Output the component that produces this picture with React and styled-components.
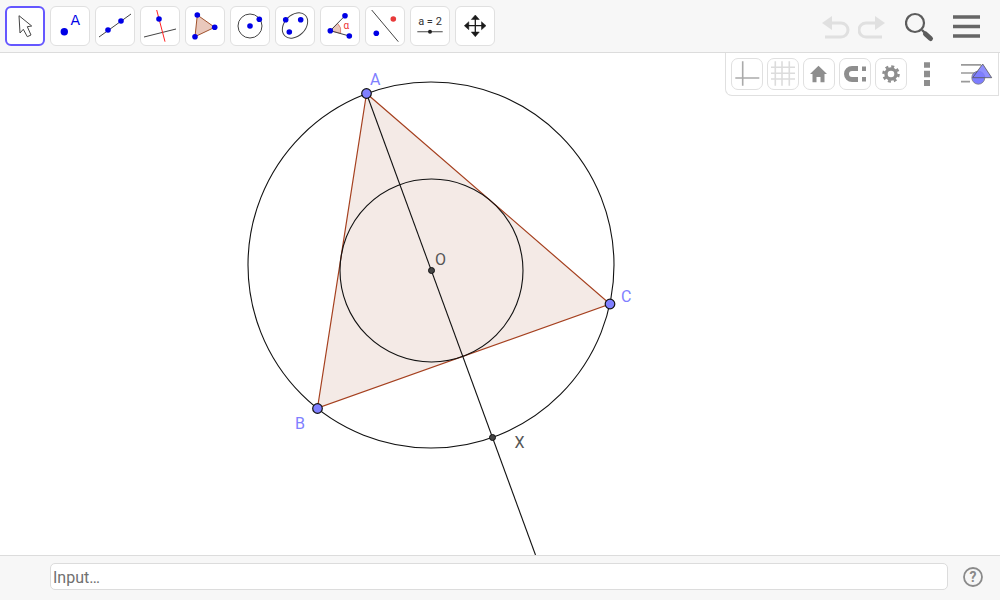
import React from "react";
import styled, { createGlobalStyle } from "styled-components";

const Global = createGlobalStyle`
  html, body { margin: 0; padding: 0; background: #fff; }
  body { font-family: Roboto, "Liberation Sans", sans-serif; }
`;
const Page = styled.div`
  width: 1000px; height: 600px; display: flex; flex-direction: column; overflow: hidden; position: relative;
`;
const Toolbar = styled.div`
  height: 53px; flex: none; display: flex; align-items: flex-start; padding: 6px 0 0 5px; box-sizing: border-box;
  background: #f7f7f7; border-bottom: 1px solid #dcdcdc; gap: 5px;
`;
const ToolButton = styled.button`
  width: 40px; height: 40px; padding: 0; box-sizing: border-box; background: #fff; border-radius: 6px;
  border: ${p => (p.$active ? "2px solid #6557ff" : "1px solid #e0e0e0")};
  display: flex; align-items: center; justify-content: center;
`;
const ToolIcon = styled.svg`
  width: 38px; height: 38px; display: block; flex: none;
`;
const RightTools = styled.div`
  margin-left: auto; display: flex; align-items: flex-start; padding: 0 20px 0 0;
`;
const HeaderIcon = styled.svg`
  display: block; width: ${p => p.$w}px; height: 40px; flex: none;
`;
const Canvas = styled.div`
  flex: 1; position: relative; background: #fff; min-height: 0;
`;
const Drawing = styled.svg`
  display: block; width: 1000px; height: 502px;
`;
const StylePanel = styled.div`
  position: absolute; top: 0; right: 1px; width: 274px; height: 43px; box-sizing: border-box;
  background: #fff; border: 1px solid #e0e0e0; border-top: none; border-bottom-left-radius: 7px;
  display: flex; align-items: flex-start; padding: 5px 0 0 5px; gap: 4px;
`;
const StyleButton = styled.button`
  width: 32px; height: 32px; padding: 0; box-sizing: border-box; background: #fff;
  border: 1px solid #e0e0e0; border-radius: 7px; display: flex; align-items: center; justify-content: center;
`;
const StyleIcon = styled.svg`
  width: 30px; height: 30px; display: block; flex: none;
`;
const PanelDots = styled.svg`
  display: block; width: 32px; height: 32px; flex: none;
`;
const PanelToggle = styled.svg`
  display: block; width: 36px; height: 32px; flex: none; margin-left: auto; margin-right: 4px;
`;
const InputBar = styled.div`
  height: 45px; flex: none; box-sizing: border-box; background: #f7f7f7; border-top: 1px solid #dcdcdc;
  display: flex; align-items: flex-start; padding: 7px 15px 0 50px; gap: 14px;
`;
const InputField = styled.div`
  width: 898px; height: 27px; box-sizing: border-box; background: #fff; border: 1px solid #dcdcdc; border-radius: 5px;
  font-size: 16px; line-height: 27px; color: #707070; padding-left: 2px; flex: none;
`;
const HelpIcon = styled.svg`
  width: 22px; height: 22px; display: block; flex: none; margin-top: 3px;
`;

const P = ({ x, y, r = 2.8, fill = "#0000e6" }) => <circle cx={x} cy={y} r={r} fill={fill} />;

const tools = [
  <path key="m" d="M13 8.7 L14 26 L17.3 22.3 L21.3 29.7 L25 28 L21.3 19.7 L25.7 19 Z" fill="#fff" stroke="#444" strokeWidth="1" strokeLinejoin="round" />,
  <g key="p"><P x={13.3} y={24.7} r={3.7} /><text x={19.5} y={18} fontSize="14" fill="#0000e6" fontFamily="'DejaVu Sans', sans-serif">A</text></g>,
  <g key="l"><path d="M3 30 L35 7" stroke="#444" strokeWidth="1" /><P x={12} y={23} /><P x={25} y={14} /></g>,
  <g key="pb"><path d="M3 30 L35 22" stroke="#444" strokeWidth="1" /><path d="M15.7 3 L24 34.7" stroke="#f22" strokeWidth="1" /><P x={18} y={12} /></g>,
  <g key="t"><path d="M11.3 8 L28.7 20.3 L9 29.7 Z" fill="#e9c8bc" stroke="#a0522d" strokeWidth="1" /><P x={11.3} y={8} /><P x={28.7} y={20.3} /><P x={9} y={29.7} /></g>,
  <g key="c"><circle cx={19} cy={19} r={12} fill="none" stroke="#444" strokeWidth="1" /><P x={19} y={19} /><P x={28.3} y={12.3} /></g>,
  <g key="e"><ellipse cx={19} cy={18.5} rx={14.5} ry={10.5} transform="rotate(-45 19 18.5)" fill="none" stroke="#444" strokeWidth="1" /><P x={9.7} y={12.7} /><P x={24.7} y={12.7} /><P x={13.3} y={25} /></g>,
  <g key="a"><path d="M9.3 23.7 L16.7 16.4 A 10.5 10.5 0 0 1 19.6 26.4 Z" fill="#e9c8bc" stroke="#d9675a" strokeWidth="0.7" /><path d="M24 8.7 L9.3 23.7 L28.3 29" fill="none" stroke="#444" strokeWidth="1" /><P x={24} y={8.7} /><P x={9.3} y={23.7} /><P x={28.3} y={29} /><text x={22.5} y={22} fontSize="10" fill="#e33" fontFamily="Roboto, sans-serif">α</text></g>,
  <g key="pl"><path d="M5.7 3 L32.3 34.7" stroke="#444" strokeWidth="1" /><P x={10.3} y={26.3} /><P x={27.3} y={12} fill="#e83a3a" /></g>,
  <g key="s"><text x={19} y={18} fontSize="11" fill="#333" textAnchor="middle" fontFamily="Roboto, sans-serif">a = 2</text><path d="M6.3 24.7 L31.7 24.7" stroke="#666" strokeWidth="1.2" /><P x={19} y={24.7} r={2} fill="#222" /></g>,
  <g key="mv" fill="#1a1a1a" stroke="#1a1a1a"><path d="M19.3 11 V27 M11 18.7 H28" strokeWidth="1.3" /><path d="M19.3 8 L23.3 12.5 H15.3 Z M19.3 29.7 L23.3 25 H15.3 Z M8.3 18.7 L12.8 14.7 V22.7 Z M30 18.7 L25.5 14.7 V22.7 Z" strokeWidth="0.5" /></g>,
];

const styleIcons = [
  <path key="a" d="M10.7 2.3 V26.7 M3.3 19 H27.3" stroke="#aaa" strokeWidth="1.6" fill="none" />,
  <path key="g" d="M7.3 2.3 V26.7 M14 2.3 V26.7 M21.3 2.3 V26.7 M3 8.3 H27 M3 14.3 H27 M3 20 H27" stroke="#dcdcdc" strokeWidth="1.6" fill="none" />,
  <path key="h" d="M14.5 6.7 L23 15 L20.5 15 L20.5 23.3 L16.5 23.3 L16.5 18 L12.5 18 L12.5 23.3 L8.5 23.3 L8.5 15 L6 15 Z" fill="#8e8e8e" />,
  <g key="m"><path d="M18 9.5 H12 A5.5 5.5 0 0 0 12 20.5 H18" fill="none" stroke="#8e8e8e" strokeWidth="5" /><rect x={22} y={7.5} width={4} height={4.5} fill="#8e8e8e" /><rect x={22} y={18} width={4} height={4.5} fill="#8e8e8e" /></g>,
  <g key="s" fill="none" stroke="#8e8e8e"><circle cx={15} cy={15} r={5} strokeWidth="3.4" /><circle cx={15} cy={15} r={7.5} strokeWidth="2.6" strokeDasharray="3 2.89" /></g>,
];

export default function App() {
  return (
    <Page>
      <Global />
      <Toolbar>
        {tools.map((t, i) => (
          <ToolButton key={i} $active={i === 0}>
            <ToolIcon viewBox="0 0 38 38">{t}</ToolIcon>
          </ToolButton>
        ))}
        <RightTools>
          <HeaderIcon $w={36} viewBox="0 0 36 40">
            <path d="M8 17 H19 A7 7 0 0 1 19 31 H3" fill="none" stroke="#e0e0e0" strokeWidth="3" />
            <path d="M0 17 L10 10 V24 Z" fill="#e0e0e0" />
          </HeaderIcon>
          <HeaderIcon $w={47} viewBox="0 0 47 40">
            <path d="M19 17 H8 A7 7 0 0 0 8 31 H24" fill="none" stroke="#e0e0e0" strokeWidth="3" />
            <path d="M27 17 L17 10 V24 Z" fill="#e0e0e0" />
          </HeaderIcon>
          <HeaderIcon $w={48} viewBox="0 0 48 40">
            <circle cx="10" cy="17" r="9" fill="none" stroke="#5c5c5c" strokeWidth="2.2" />
            <path d="M17 24 L20 27" stroke="#5c5c5c" strokeWidth="2.4" />
            <path d="M20.5 28 L25.5 32.5" stroke="#5c5c5c" strokeWidth="5" strokeLinecap="round" />
          </HeaderIcon>
          <HeaderIcon $w={27} viewBox="0 0 27 40">
            <path d="M0 11 H27 M0 20.5 H27 M0 30 H27" stroke="#666" strokeWidth="3.6" />
          </HeaderIcon>
        </RightTools>
      </Toolbar>
      <Canvas>
        <Drawing viewBox="0 53 1000 502">
          <polygon points="366.5,93.5 317.5,408 610,304" fill="#f4eae6" stroke="#a5401f" strokeWidth="1.2" />
          <circle cx="431" cy="265" r="183" fill="none" stroke="#111" strokeWidth="1.1" />
          <circle cx="431.5" cy="270.5" r="91.5" fill="none" stroke="#111" strokeWidth="1.1" />
          <path d="M366.5 93.5 L535.5 555" stroke="#111" strokeWidth="1.1" />
          <circle cx="431.5" cy="270.5" r="3" fill="#444" stroke="#111" strokeWidth="1" />
          <circle cx="492.5" cy="437.5" r="3" fill="#444" stroke="#111" strokeWidth="1" />
          <circle cx="366.5" cy="93.5" r="4.8" fill="#8080ff" stroke="#111" strokeWidth="1.2" />
          <circle cx="317.5" cy="408.5" r="4.8" fill="#8080ff" stroke="#111" strokeWidth="1.2" />
          <circle cx="610" cy="304" r="4.8" fill="#8080ff" stroke="#111" strokeWidth="1.2" />
          <g fontFamily="Roboto, sans-serif" fontSize="16">
            <text x="370" y="84.5" fill="#8080ff">A</text>
            <text x="295" y="429" fill="#8080ff">B</text>
            <text x="621" y="302" fill="#8080ff">C</text>
            <text x="435" y="265" fill="#555">O</text>
            <text x="514.5" y="448" fill="#555">X</text>
          </g>
        </Drawing>
        <StylePanel>
          {styleIcons.map((s, i) => (
            <StyleButton key={i}>
              <StyleIcon viewBox="0 0 30 30">{s}</StyleIcon>
            </StyleButton>
          ))}
          <PanelDots viewBox="0 0 32 32">
            <path d="M13 4.3 H19 V9.7 H13 Z M13 12.7 H19 V19.3 H13 Z M13 22 H19 V28 H13 Z" fill="#8e8e8e" />
          </PanelDots>
          <PanelToggle viewBox="0 0 36 32">
            <path d="M3 6.8 H23 M3 15 H18 M3 23.7 H12" stroke="#9a9a9a" strokeWidth="1.7" />
            <circle cx="20.3" cy="19.7" r="6.5" fill="#7d7dff" stroke="#7a7a7a" strokeWidth="0.8" />
            <path d="M24.7 6 L33.7 19.7 H14.7 Z" fill="#7d7dff" fillOpacity="0.85" stroke="#555" strokeWidth="0.8" />
          </PanelToggle>
        </StylePanel>
      </Canvas>
      <InputBar>
        <InputField>Input…</InputField>
        <HelpIcon viewBox="0 0 22 22">
          <circle cx="11" cy="11" r="9" fill="none" stroke="#8a8a8a" strokeWidth="1.8" />
          <text x="11" y="16" fontSize="14" fontWeight="700" textAnchor="middle" fill="#8a8a8a" fontFamily="Roboto, sans-serif">?</text>
        </HelpIcon>
      </InputBar>
    </Page>
  );
}
